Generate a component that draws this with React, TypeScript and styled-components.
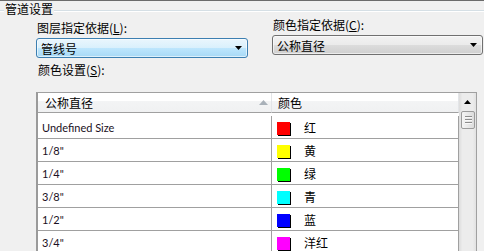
import React from 'react'
import styled, { createGlobalStyle } from 'styled-components'

const CJK = `"Noto Sans CJK SC", "Noto Sans", sans-serif`

const GlobalStyle = createGlobalStyle`
  html, body {
    margin: 0;
    padding: 0;
    background: #f0f0f0;
  }
  body {
    font-family: ${CJK};
    font-size: 12px;
    color: #000;
  }
`

interface Row {
  size: string
  color: string
  name: string
}

const rows: Row[] = [
  { size: 'Undefined Size', color: '#ff0000', name: '红' },
  { size: '1/8"', color: '#ffff00', name: '黄' },
  { size: '1/4"', color: '#00ff00', name: '绿' },
  { size: '3/8"', color: '#00ffff', name: '青' },
  { size: '1/2"', color: '#0000ff', name: '蓝' },
  { size: '3/4"', color: '#ff00ff', name: '洋红' },
]

const Frame = styled.div`
  width: 484px;
  height: 251px;
  overflow: hidden;
  border-top: 1px solid #6b6b6b;
  box-sizing: border-box;
`

const GroupHead = styled.div`
  display: flex;
  height: 16px;
`

const Rule = styled.div<{ $grow?: boolean }>`
  flex: ${p => (p.$grow ? 1 : '0 0 4px')};
  margin-top: 9px;
  height: 0;
  border-top: 1px solid #d5dfe5;
  border-bottom: 1px solid #ffffff;
`

const GroupTitle = styled.div`
  line-height: 15px;
  padding: 0 1px;
`

const Fields = styled.div`
  display: grid;
  grid-template-columns: 212px 211px;
  column-gap: 24px;
  padding-left: 36px;
`

const Field = styled.div<{ $offset: number }>`
  padding-top: ${p => p.$offset}px;
  display: flex;
  flex-direction: column;
  gap: 3px;
`

const Label = styled.div`
  line-height: 15px;
  padding-left: 1px;
`

const Select = styled.div<{ $focused?: boolean }>`
  height: 20px;
  box-sizing: border-box;
  display: flex;
  align-items: center;
  justify-content: space-between;
  padding: 0 5px 0 4px;
  border-radius: 3px;
  border: 1px solid ${p => (p.$focused ? '#3c7fb1' : '#707070')};
  background: ${p =>
    p.$focused
      ? 'linear-gradient(#eaf6fd 0%, #d9f0fc 50%, #bee6fd 50%, #a7d9f5 100%)'
      : 'linear-gradient(#f2f2f2 0%, #ebebeb 50%, #dddddd 50%, #cfcfcf 100%)'};
  box-shadow: inset 0 0 0 1px rgba(255, 255, 255, 0.6);
  line-height: 15px;
`

const SectionLabel = styled(Label)`
  margin: 4px 0 0 37px;
`

const List = styled.div`
  margin: 15px 0 0 36px;
  width: 441px;
  box-sizing: border-box;
  border: 1px solid #a0a0a0;
  border-left: 2px solid #9a9a9a;
  border-bottom: none;
  display: flex;
  background: #ffffff;
`

const Grid = styled.div`
  width: 421px;
  display: grid;
  grid-template-columns: 234px 187px;
  grid-auto-rows: 23px;
`

const HeadCell = styled.div<{ $pad: number }>`
  height: 20px;
  box-sizing: border-box;
  display: flex;
  align-items: center;
  justify-content: space-between;
  padding: 0 3px 0 ${p => p.$pad}px;
  border-right: 1px solid #e3e5e8;
  border-bottom: 1px solid #a0a0a0;
  background: linear-gradient(#ffffff 0%, #ffffff 40%, #f3f4f5 40%, #f0f1f2 100%);
  line-height: 15px;
`

const Cell = styled.div`
  height: 23px;
  box-sizing: border-box;
  display: flex;
  align-items: center;
  border-right: 1px solid #a0a0a0;
  border-bottom: 1px solid #a0a0a0;
`

const SizeCell = styled(Cell)`
  padding-left: 4px;
  font-family: Lato, "Liberation Sans", sans-serif;
  font-size: 11px;
  color: #1a1023;
`

const ColorCell = styled(Cell)`
  padding-left: 5px;
  gap: 13px;
`

const Swatch = styled.div<{ $color: string }>`
  width: 13px;
  height: 13px;
  margin-top: 2px;
  background: ${p => p.$color};
  box-shadow: 1px 1px 0 #000;
  margin-right: 1px;
`

const Scrollbar = styled.div`
  width: 17px;
  background: linear-gradient(90deg, #dcdcdc 0%, #ececec 20%, #ececec 80%, #e2e2e2 100%);
  display: flex;
  flex-direction: column;
`

const ScrollButton = styled.div`
  height: 17px;
  display: flex;
  align-items: center;
  justify-content: center;
`

const Thumb = styled.div`
  margin: 1px 1px 0 2px;
  height: 18px;
  box-sizing: border-box;
  border: 1px solid #9b9b9b;
  border-radius: 2px;
  background: linear-gradient(90deg, #f4f4f4 0%, #e8e8e8 50%, #dcdcdc 100%);
  display: flex;
  flex-direction: column;
  align-items: center;
  justify-content: center;
  gap: 1px;
`

const Grip = styled.div`
  width: 7px;
  height: 1px;
  background: #8c8c8c;
  border-bottom: 1px solid #f8f8f8;
`

const Arrow = () => (
  <svg width="7" height="4" viewBox="0 0 7 4">
    <path d="M0 0H7L3.5 4Z" fill="#000" />
  </svg>
)

const SortArrow = () => (
  <svg width="9" height="5" viewBox="0 0 9 5">
    <path d="M0 5L4.5 0L9 5Z" fill="#a9b1b9" />
  </svg>
)

const UpArrow = () => (
  <svg width="7" height="4" viewBox="0 0 7 4">
    <path d="M0 4L3.5 0L7 4Z" fill="#000" />
  </svg>
)

const App = () => {
  return (
    <Frame>
      <GlobalStyle />
      <GroupHead>
        <Rule />
        <GroupTitle>管道设置</GroupTitle>
        <Rule $grow />
      </GroupHead>
      <Fields>
        <Field $offset={3}>
          <Label>图层指定依据(<u>L</u>):</Label>
          <Select $focused>
            <span>管线号</span>
            <Arrow />
          </Select>
        </Field>
        <Field $offset={0}>
          <Label>颜色指定依据(<u>C</u>):</Label>
          <Select>
            <span>公称直径</span>
            <Arrow />
          </Select>
        </Field>
      </Fields>
      <SectionLabel>颜色设置(<u>S</u>):</SectionLabel>
      <List>
        <Grid>
          <HeadCell $pad={7}>
            <span>公称直径</span>
            <SortArrow />
          </HeadCell>
          <HeadCell $pad={6}>
            <span>颜色</span>
          </HeadCell>
          {rows.map((r, i) => (
            <React.Fragment key={i}>
              <SizeCell>{r.size}</SizeCell>
              <ColorCell>
                <Swatch $color={r.color} />
                <span>{r.name}</span>
              </ColorCell>
            </React.Fragment>
          ))}
        </Grid>
        <Scrollbar>
          <ScrollButton>
            <UpArrow />
          </ScrollButton>
          <Thumb>
            <Grip />
            <Grip />
            <Grip />
          </Thumb>
        </Scrollbar>
      </List>
    </Frame>
  )
}

export default App
